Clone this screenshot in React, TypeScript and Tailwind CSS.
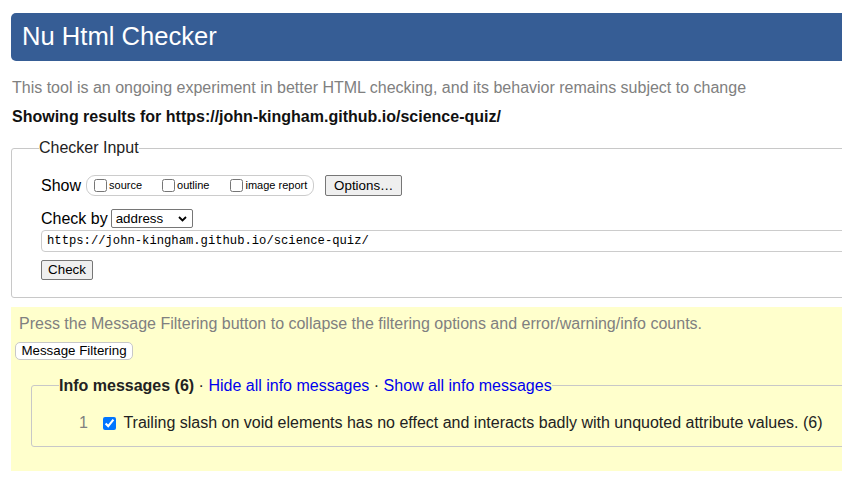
import React from "react"

function Chevron() {
  return (
    <svg width="9" height="6" viewBox="0 0 9 6" className="shrink-0">
      <path d="M1 1l3.5 3.5L8 1" fill="none" stroke="#000" strokeWidth="1.8" />
    </svg>
  )
}

export default function App() {
  const sans = "font-['Liberation_Sans',Arial,sans-serif]"

  return (
    <div className={`w-full min-h-[480px] overflow-hidden bg-white text-black ${sans}`}>
      <div className="w-[900px] pl-[11px] pt-[13px] pb-[9px]">
        {/* Title bar */}
        <header className="h-[48px] rounded-l-[5px] bg-[#365d95] pl-[11px] flex items-center">
          <h1 className="text-[25.6px] leading-none text-white font-normal">Nu Html Checker</h1>
        </header>

        <p className="mt-[18px] pl-[1px] text-[16px] leading-[18.4px] text-[#808080]">
          This tool is an ongoing experiment in better HTML checking, and its behavior remains subject to change
        </p>
        <p className="mt-[11px] pl-[1px] text-[16px] leading-[18.4px] font-bold text-[#111]">
          Showing results for https://john-kingham.github.io/science-quiz/
        </p>

        {/* Checker input */}
        <fieldset className="mt-[12px] border border-[#c8c8c8] rounded-[3px] pl-[29px] pt-[18px] pb-[17px]">
          <legend className="-ml-[2px] text-[16px] leading-[18.4px] text-[#222]">Checker Input</legend>

          <div className="flex items-center h-[21px]">
            <span className="text-[16px] leading-[18.4px]">Show</span>
            <div className="ml-[5px] h-[21px] flex items-center rounded-[9px] border border-[#cccccc] pl-[7px] pr-[6px] text-[11px]">
              <label className="flex items-center">
                <input type="checkbox" className="w-[13px] h-[13px] m-0" />
                <span className="ml-[2px]">source</span>
              </label>
              <label className="ml-[20px] flex items-center">
                <input type="checkbox" className="w-[13px] h-[13px] m-0" />
                <span className="ml-[2px]">outline</span>
              </label>
              <label className="ml-[21px] flex items-center">
                <input type="checkbox" className="w-[13px] h-[13px] m-0" />
                <span className="ml-[2px]">image report</span>
              </label>
            </div>
            <button className="ml-[11px] w-[77px] h-[21px] flex items-center justify-center bg-[#efefef] border border-[#767676] rounded-[2px] text-[13.33px]">
              Options…
            </button>
          </div>

          <div className="mt-[13px] flex items-center h-[19px]">
            <span className="text-[16px] leading-[18.4px]">Check by</span>
            <div className="ml-[3px] w-[82px] h-[19px] flex items-center justify-between border border-[#767676] rounded-[2px] pl-[4px] pr-[5px] text-[13.33px]">
              <span>address</span>
              <Chevron />
            </div>
          </div>

          <div className="mt-[2px] h-[22px] flex items-center border border-[#cccccc] rounded-l-[4px] pl-[5px] font-['Liberation_Mono',monospace] text-[12.2px]">
            https://john-kingham.github.io/science-quiz/
          </div>

          <button className="mt-[8px] w-[52px] h-[20px] flex items-center justify-center bg-[#efefef] border border-[#767676] rounded-[2px] text-[13.33px]">
            Check
          </button>
        </fieldset>

        {/* Message filtering */}
        <div className="mt-[9px] bg-[#ffffcc] pt-[7.6px] pl-[4px] pb-[24px]">
          <p className="ml-[4px] text-[16px] leading-[18.4px] text-[#808080]">
            Press the Message Filtering button to collapse the filtering options and error/warning/info counts.
          </p>
          <button className="mt-[8.7px] w-[118px] h-[18px] flex items-center justify-center bg-white border border-[#c8c8c8] rounded-[5px] text-[13.33px]">
            Message Filtering
          </button>

          <fieldset className="mt-[16.7px] ml-[16px] border border-[#c8c8c8] rounded-[3px] pl-[27px] pt-[19.2px] pb-[13px]">
            <legend className="text-[16px] leading-[18.4px] text-[#222]">
              <b>Info messages (6)</b> · <a href="#" className="text-[#0000ee]">Hide all info messages</a> ·{" "}
              <a href="#" className="text-[#0000ee]">Show all info messages</a>
            </legend>
            <div className="flex items-center h-[18.4px] text-[16px] leading-[18.4px]">
              <span className="ml-[20px] text-[#808080]">1</span>
              <input type="checkbox" defaultChecked className="ml-[15.5px] w-[13px] h-[13px] m-0 accent-[#0075ff]" />
              <span className="ml-[7px] text-[#222]">
                Trailing slash on void elements has no effect and interacts badly with unquoted attribute values. (6)
              </span>
            </div>
          </fieldset>
        </div>
      </div>
    </div>
  )
}
